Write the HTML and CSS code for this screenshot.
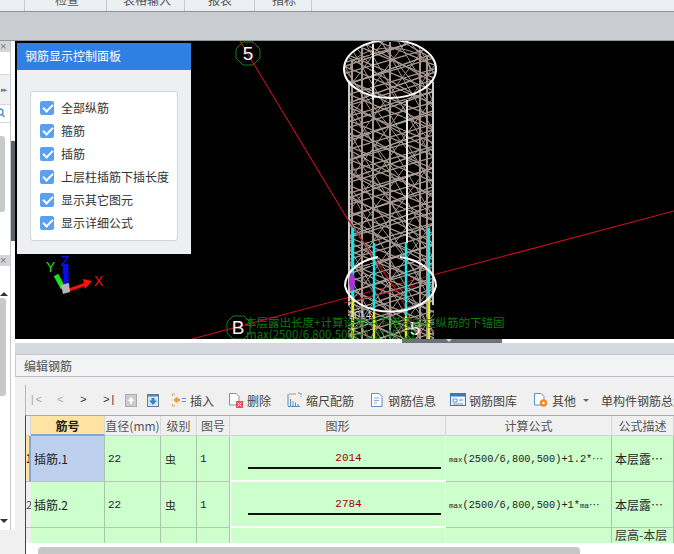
FILE: index.html
```html
<!DOCTYPE html>
<html lang="zh">
<head>
<meta charset="utf-8">
<title>编辑钢筋</title>
<link rel="stylesheet" href="styles.css">
</head>
<body>
<div class="app">
  <nav class="ribbon">
    <span class="tab tab-check">检查</span>
    <span class="tab tab-table">表格输入</span>
    <span class="tab tab-report">报表</span>
    <span class="tab tab-index">指标</span>
  </nav>
  <div class="strip"></div>
  <div class="work">
    <aside class="side">
      <div class="side-top">
        <div class="side-head">×</div>
        <div class="side-blank"></div>
        <div class="side-tools">▸▸</div>
        <div class="side-search">
          <svg class="lens" viewBox="0 0 8 12"><circle cx="0" cy="5" r="3" fill="none" stroke="#4a90c8" stroke-width="1.3"/><path d="M2 7l2.500 3" stroke="#4a90c8" stroke-width="1.300"/></svg>
        </div>
        <div class="side-list"><div class="side-thumb"></div></div>
      </div>
      <div class="side-bottom">
        <div class="side-head">×</div>
        <div class="side-blank2"></div>
        <div class="side-arrow-up"></div>
        <div class="side-thumb2"></div>
        <div class="side-arrow-down"></div>
      </div>
      <div class="side-foot"></div>
      <div class="side-splitter"></div>
    </aside>
    <main class="content">
      <section class="viewport">
        <svg class="scene" viewBox="15 41 659 298" xmlns="http://www.w3.org/2000/svg">
          <defs>
            <pattern id="p1" patternUnits="userSpaceOnUse" width="37" height="11"><path d="M0 11L37 0" stroke="#a5978f" stroke-width="1.200"/></pattern>
            <pattern id="p2" patternUnits="userSpaceOnUse" width="31" height="13"><path d="M0 0L31 13" stroke="#a5978f" stroke-width="1.200"/></pattern>
            <pattern id="p3" patternUnits="userSpaceOnUse" width="17" height="29"><path d="M0 0L17 29" stroke="#a5978f" stroke-width="1"/></pattern>
            <pattern id="p4" patternUnits="userSpaceOnUse" width="23" height="31"><path d="M0 31L23 0" stroke="#a5978f" stroke-width="1"/></pattern>
            <pattern id="p5" patternUnits="userSpaceOnUse" width="53" height="19"><path d="M0 19L53 0" stroke="#b0a29a" stroke-width="1.400"/></pattern>
            <pattern id="p6" patternUnits="userSpaceOnUse" width="41" height="23"><path d="M0 0L41 23" stroke="#a5978f" stroke-width="1.100"/></pattern>
            <pattern id="p7" patternUnits="userSpaceOnUse" width="29" height="37"><path d="M0 0L29 37" stroke="#a5978f" stroke-width="1"/></pattern>
            <clipPath id="col"><ellipse cx="390" cy="69" rx="45" ry="28"/><rect x="348" y="69" width="86" height="270"/></clipPath>
          </defs>
          <path class="axis-red" d="M240 41L345 215M345 215L400 296L420 339"/>
          <path class="axis-red" d="M192 339L674 211"/>
          <g clip-path="url(#col)">
            <rect x="340" y="40" width="100" height="300" fill="url(#p1)"/>
            <rect x="340" y="40" width="100" height="300" fill="url(#p2)"/>
            <rect x="340" y="40" width="100" height="300" fill="url(#p3)"/>
            <rect x="340" y="40" width="100" height="300" fill="url(#p4)"/>
            <rect x="340" y="40" width="100" height="300" fill="url(#p5)"/>
            <rect x="340" y="40" width="100" height="300" fill="url(#p6)"/>
            <rect x="340" y="40" width="100" height="300" fill="url(#p7)"/>
            <path class="bars" d="M352 60V339M362 48V339M390 42V339M420 50V339M427 56V339"/>
            <path class="bars-white" d="M373 44V100M407 100V243"/>
            <path class="bars" d="M373 100V243"/>
          </g>
          <path class="edge" d="M349 82V305M433 82V305"/>
          <ellipse class="ring" cx="390" cy="69" rx="46" ry="29"/>
          <path class="ring-thin" d="M350 70A40 22 0 0 1 430 70"/>
          <path class="axis-red dim" d="M345 215L400 296M344 303L415 286"/>
          <path class="cyan" d="M353 228V298M374 243V312M406 243V316M429 228V298"/>
          <path class="yellow" d="M353 298V339M374 312V339M406 316V339M429 298V339"/>
          <ellipse class="blob" cx="352" cy="282" rx="3" ry="9"/>
          <path class="ring" d="M345 286A46 30 0 0 1 378 257M400 257A46 30 0 0 1 436 286A46 30 0 0 1 345 286"/>
          <polygon class="hex" points="243,42 253,42 260,49 260,58 253,65 243,65 236,58 236,49"/>
          <text class="grid-label" x="248" y="60" text-anchor="middle">5</text>
          <polygon class="hex" points="233,316 244,316 250,322 250,333 244,339 233,339 227,333 227,322"/>
          <text class="grid-label" x="238" y="334" text-anchor="middle">B</text>
          <text class="grid-label" x="415" y="335" text-anchor="middle">5</text>
          <text class="small-num" x="349" y="319">2014</text>
          <text class="note" x="245" y="327">本层露出长度+计算设置中不搭接的柱纵筋的下锚固</text>
          <text class="note" x="246" y="339">max(2500/6,800,500)+1.2*45*22</text>
          <path class="gz-green" d="M63 288L56 275"/>
          <path class="gz-blue" d="M66 287V268"/>
          <path class="gz-blue" d="M65 274L66 264"/>
          <path class="gz-red" d="M69 290L86 284"/>
          <polygon fill="#ff1010" points="92,281 83,279 85,289"/>
          <polygon fill="#b8b4b4" points="61,285 69,283 70,292 63,294"/>
          <text class="gz-y" x="46" y="272">Y</text>
          <text class="gz-z" x="61" y="266">Z</text>
          <text class="gz-x" x="94" y="286">X</text>
        </svg>
        <div class="control-panel">
          <h2 class="cp-title">钢筋显示控制面板</h2>
          <div class="cp-body">
            <ul class="cp-card">
              <li class="cp-row"><span class="check"></span>全部纵筋</li>
              <li class="cp-row"><span class="check"></span>箍筋</li>
              <li class="cp-row"><span class="check"></span>插筋</li>
              <li class="cp-row"><span class="check"></span>上层柱插筋下插长度</li>
              <li class="cp-row"><span class="check"></span>显示其它图元</li>
              <li class="cp-row"><span class="check"></span>显示详细公式</li>
            </ul>
          </div>
        </div>
      </section>
      <div class="handle-row"><div class="handle"><span class="handle-arrow"></span></div></div>
      <div class="band"></div>
      <header class="panel-head">编辑钢筋</header>
      <section class="panel-body">
        <div class="toolbar">
          <span class="nav nav-first dimmed">|&lt;</span>
          <span class="nav nav-prev dimmed">&lt;</span>
          <span class="nav nav-next">&gt;</span>
          <span class="nav nav-last">&gt;|</span>
          <svg class="ico ico-up" viewBox="0 0 12 13"><rect x=".5" y=".5" width="11" height="12" fill="#c9cdd0" stroke="#a9adb0"/><path d="M6 3L2.500 7H5V10H7V7H9.500Z" fill="#fff"/></svg>
          <svg class="ico ico-down" viewBox="0 0 12 13"><rect x=".5" y=".5" width="11" height="12" fill="#d8e6f2" stroke="#5b7f9f"/><rect x=".5" y=".5" width="11" height="2" fill="#5b7f9f"/><path d="M6 11L2 6.500H4.500V4H7.500V6.500H10Z" fill="#2f86d8"/></svg>
          <span class="tool tool-insert"><svg class="ico16" viewBox="0 0 16 14"><path d="M4 1H1.500V3M1.500 11V13H4" fill="none" stroke="#d9a060"/><path d="M2 7L6.500 3.500V5.800H9V8.200H6.500V10.500Z" fill="#ee9a3c"/><path d="M10.500 5.500H15M10.500 8.500H15" fill="none" stroke="#5b9bd5"/></svg>插入</span>
          <span class="tool tool-del"><svg class="ico16" viewBox="0 0 16 16"><path d="M1.500 1.500H8L11 4.500V13H1.500Z" fill="#fff" stroke="#8a8f94"/><rect x="8" y="9" width="7" height="7" fill="#e0505a"/><path d="M9.500 10.500L13.500 14.500M13.500 10.500L9.500 14.500" stroke="#fff"/></svg>删除</span>
          <span class="tool tool-scale"><svg class="ico16" viewBox="0 0 16 16"><path d="M1 2V14M3.500 7V14M6 9V14M8.500 10.500V14M11 12V14M1 14.500H13" stroke="#5b8fb8" fill="none"/><path d="M2 2H9" stroke="#e08a3c"/><path d="M11 1H14V5" stroke="#7a8a9a" fill="none" stroke-dasharray="2 1"/></svg>缩尺配筋</span>
          <span class="tool tool-info"><svg class="ico16" viewBox="0 0 16 16"><path d="M2.500 1.500H10L13 4.500V14.500H2.500Z" fill="#fff" stroke="#5b8fc8"/><path d="M5 6H10M5 8.500H10M5 11H8" stroke="#8aa8c8"/></svg>钢筋信息</span>
          <span class="tool tool-lib"><svg class="ico16" viewBox="0 0 16 14"><rect x=".5" y=".5" width="15" height="12" fill="#eef5fb" stroke="#3a7ab8"/><rect x=".5" y=".5" width="15" height="3" fill="#3a7ab8"/><path d="M3 6H7V9H3ZM9 7H13M3 11H13" stroke="#7a9ab8" fill="none"/></svg>钢筋图库</span>
          <span class="tool tool-other"><svg class="ico16" viewBox="0 0 16 16"><path d="M1.500 1.500H8L11 4.500V13H1.500Z" fill="#fff" stroke="#5b8fc8"/><circle cx="10.500" cy="11" r="3.700" fill="#ee8a2c"/><circle cx="10.500" cy="11" r="1.300" fill="#fff"/></svg>其他</span>
          <span class="caret"></span>
          <span class="tool tool-total">单构件钢筋总量</span>
        </div>
        <div class="grid-wrap">
          <table class="grid">
            <colgroup>
              <col class="c0"><col class="c1"><col class="c2"><col class="c3"><col class="c4"><col class="c5"><col class="c6"><col class="c7"><col class="c8">
            </colgroup>
            <thead>
              <tr><th></th><th class="sel-head">筋号</th><th>直径(mm)</th><th>级别</th><th>图号</th><th>图形</th><th>计算公式</th><th>公式描述</th><th></th></tr>
            </thead>
            <tbody>
              <tr>
                <td class="rownum cur">1</td><td class="name sel">插筋.1</td><td class="mono">22</td><td class="grade">虫</td><td class="mono">1</td>
                <td class="shape"><span class="len">2014</span><span class="bar"></span></td>
                <td class="formula"><span class="fn">max</span>(2500/6,800,500)+1.2*⋯</td><td class="desc">本层露…</td><td></td>
              </tr>
              <tr>
                <td class="rownum">2</td><td class="name">插筋.2</td><td class="mono">22</td><td class="grade">虫</td><td class="mono">1</td>
                <td class="shape"><span class="len">2784</span><span class="bar"></span></td>
                <td class="formula"><span class="fn">max</span>(2500/6,800,500)+1*<span class="fn">ma</span>⋯</td><td class="desc">本层露…</td><td></td>
              </tr>
              <tr class="last">
                <td class="rownum"></td><td></td><td></td><td></td><td></td><td class="shape"></td><td></td><td class="desc top">层高-本层</td><td></td>
              </tr>
            </tbody>
          </table>
        </div>
        <div class="hscroll"><div class="hthumb"></div></div>
      </section>
    </main>
  </div>
</div>
</body>
</html>
```

FILE: styles.css
```css
* { box-sizing: border-box; margin: 0; padding: 0; }
html, body { width: 674px; height: 554px; overflow: hidden; background: #f0f0f0; }
body { font-family: "Noto Sans CJK SC", "Liberation Sans", sans-serif; font-size: 12px; color: #333; }
.app { display: flex; flex-direction: column; width: 674px; height: 554px; overflow: hidden; }

.ribbon { height: 12px; flex: none; display: flex; align-items: flex-end; background: #edf0f2; border-bottom: 1px solid #8f9499; padding-left: 24px; overflow: hidden; }
.tab { border-left: 1px solid #c8cbce; height: 18px; line-height: 14px; color: #555; font-size: 12px; flex: none; padding-left: 3px; padding-bottom: 4px; display: flex; align-items: flex-end; justify-content: center; }
.tab-check { width: 82px; }
.tab-table { width: 78px; }
.tab-report { width: 70px; padding-left: 1px; }
.tab-index { width: 58px; border-right: 1px solid #c8cbce; padding-left: 2px; }

.strip { height: 29px; flex: none; background: #c9ccd1; border-bottom: 1px solid #8f9499; }
.work { flex: 1; display: flex; min-height: 0; }

.side { width: 15px; flex: none; background: #fff; position: relative; display: flex; flex-direction: column; overflow: hidden; }
.side-top { height: 214px; flex: none; width: 11px; display: flex; flex-direction: column; border-right: 1px solid #c5c8cc; }
.side-head { height: 11px; flex: none; background: #d3d5d8; color: #777; font-size: 11px; line-height: 11px; padding-left: 0; font-family: "Liberation Sans", sans-serif; }
.side-blank { height: 22px; flex: none; background: #fff; }
.side-tools { height: 30px; flex: none; background: #f0f1f2; border-top: 1px solid #d8d8d8; color: #777; font-size: 7px; line-height: 30px; letter-spacing: -1px; padding-left: 1px; font-family: "DejaVu Sans", sans-serif; }
.side-search { height: 19px; flex: none; background: #fff; border-top: 1px solid #d8d8d8; border-bottom: 1px solid #d8d8d8; }
.lens { display: block; width: 8px; height: 12px; margin-top: 2px; }
.side-list { flex: 1; padding-top: 13px; background: #fff; }
.side-thumb { width: 5px; height: 76px; background: #c9c9c9; border-radius: 0 3px 3px 0; }
.side-bottom { height: 275px; flex: none; width: 11px; display: flex; flex-direction: column; margin-top: 0; border-right: 1px solid #c5c8cc; background: #fff; }
.side-blank2 { height: 26px; flex: none; }
.side-arrow-up { height: 0; width: 0; margin-left: 0; border-left: 4px solid transparent; border-right: 4px solid transparent; border-bottom: 4px solid #333; flex: none; margin-bottom: 2px; }
.side-thumb2 { width: 6px; height: 98px; background: #c9c9c9; border-radius: 0 3px 3px 0; flex: none; }
.side-arrow-down { height: 0; width: 0; margin-top: 123px; border-left: 4px solid transparent; border-right: 4px solid transparent; border-top: 4px solid #333; flex: none; }
.side-foot { flex: 1; background: #f0f0f0; width: 15px; }
.side-splitter { position: absolute; left: 11px; top: 100px; width: 4px; height: 100px; background: #5f6368; }

.content { flex: 1; min-width: 0; display: flex; flex-direction: column; }
.viewport { height: 298px; flex: none; background: #000; position: relative; overflow: hidden; }
.scene { display: block; width: 659px; height: 298px; }

.axis-red { stroke: #c8101c; stroke-width: 1.100; fill: none; }
.axis-red.dim { stroke: #a01822; }
.bars { stroke: #a5978f; stroke-width: 2; fill: none; }
.bars-white { stroke: #e8e4e2; stroke-width: 2; fill: none; }
.edge { stroke: #cfcac7; stroke-width: 2; fill: none; }
.ring { stroke: #fff; stroke-width: 2; fill: none; }
.ring-thin { stroke: #a5978f; stroke-width: 1; fill: none; }
.cyan { stroke: #19e6e6; stroke-width: 2.500; fill: none; }
.yellow { stroke: #e0e838; stroke-width: 2.500; fill: none; }
.blob { fill: #b030d8; }
.hex { fill: none; stroke: #1c7a1c; stroke-width: 1; }
.grid-label { fill: #f4f4f4; font-family: "Liberation Sans", sans-serif; font-size: 19px; }
.small-num { fill: #d8d8d8; font-family: "Liberation Sans", sans-serif; font-size: 10px; }
.note { fill: #0c7a0c; font-family: "Noto Sans CJK SC", sans-serif; font-size: 11.500px; }
.gz-green { stroke: #1ee01e; stroke-width: 5; }
.gz-blue { stroke: #0a0af0; stroke-width: 5; }
.gz-red { stroke: #f01010; stroke-width: 3; }
.gz-y, .gz-z, .gz-x { font-family: "Liberation Sans", sans-serif; font-size: 14px; }
.gz-y { fill: #1ee01e; }
.gz-z { fill: #1010ff; }
.gz-x { fill: #f01010; }

.control-panel { position: absolute; left: 2px; top: 2px; width: 174px; height: 211px; background: #eeeff1; display: flex; flex-direction: column; }
.cp-title { height: 27px; flex: none; background: #2f80e4; color: #fff; font-size: 12px; font-weight: normal; line-height: 26px; padding-left: 8px; }
.cp-body { padding: 21px 13px 0; }
.cp-card { list-style: none; height: 150px; background: #fff; border: 1px solid #d2d4d8; border-radius: 3px; padding: 4px 0 0 9px; display: flex; flex-direction: column; }
.cp-row { height: 23px; flex: none; display: flex; align-items: center; gap: 7px; color: #333; font-size: 12px; white-space: nowrap; }
.check { width: 14px; height: 14px; background: #5aa0f0; border-radius: 2px; position: relative; flex: none; }
.check::after { content: ""; position: absolute; left: 3px; top: 3px; width: 8px; height: 4px; border-left: 2px solid #fff; border-bottom: 2px solid #fff; transform: rotate(-45deg); }

.handle-row { height: 4px; flex: none; background: #fff; padding-left: 387px; }
.handle { width: 100px; height: 4px; background: #6c7278; position: relative; }
.handle-arrow { position: absolute; left: 44px; top: 0; border-left: 3px solid transparent; border-right: 3px solid transparent; border-top: 3px solid #d8dadc; }
.band { height: 12px; flex: none; background: #d5d8de; border-bottom: 1px solid #c2c5ca; }
.panel-head { height: 22px; flex: none; background: #f2f3f4; border-bottom: 1px solid #b8bbbf; border-left: 1px solid #c8cacd; padding-left: 8px; line-height: 21px; color: #666; font-size: 12px; font-weight: 500; }
.panel-body { flex: 1; min-height: 0; display: flex; flex-direction: column; padding: 8px 0 0 10px; background: #f0f0f0; }

.toolbar { height: 30px; flex: none; position: relative; display: flex; align-items: center; border-left: 1px solid #b8b8b8; color: #444; font-size: 12px; overflow: hidden; }
.nav { font-family: "Liberation Mono", monospace; font-size: 11px; color: #333; flex: none; }
.dimmed { color: #aaa; }
.nav-first { margin-left: 3px; width: 28px; }
.nav-prev { width: 23px; }
.nav-next { width: 23px; }
.nav-last { width: 22px; }
.ico { width: 12px; height: 13px; flex: none; }
.ico-down { margin-left: 10px; }
.ico16 { width: 16px; height: 16px; flex: none; }
.tool { display: flex; align-items: center; gap: 3px; white-space: nowrap; flex: none; }
.tool-insert { margin-left: 12px; }
.tool-del { margin-left: 14px; }
.tool-scale { margin-left: 16px; }
.tool-info { margin-left: 15px; }
.tool-lib { margin-left: 14px; }
.tool-other { margin-left: 16px; }
.caret { margin-left: 7px; border-left: 3px solid transparent; border-right: 3px solid transparent; border-top: 3px solid #666; flex: none; }
.tool-total { margin-left: 12px; }

.grid-wrap { height: 128px; flex: none; overflow: hidden; border-left: 1px solid #444; border-top: 1px solid #a8a8a8; background: #fff; }
.grid { table-layout: fixed; width: 690px; border-collapse: separate; border-spacing: 0; }
.c0 { width: 5px; }
.c1 { width: 74px; }
.c2 { width: 56px; }
.c3 { width: 36px; }
.c4 { width: 33px; }
.c5 { width: 216px; }
.c6 { width: 166px; }
.c7 { width: 62px; }
.c8 { width: 42px; }
.grid th { height: 20px; background: #f0f0f0; font-weight: normal; color: #555; font-size: 12px; border-right: 1px solid #d8d8d8; border-bottom: 1px solid #d0d0d0; text-align: center; white-space: nowrap; padding: 0; overflow: hidden; }
.grid th.sel-head { background: #ffe3a3; color: #222; font-weight: 700; border-bottom: 2px solid #7fa7d8; }
.grid td { height: 46px; background: #ccffcc; border-right: 1px solid #a9c4a9; border-bottom: 1px solid #b4c8b4; color: #222; font-size: 12px; padding: 0 0 0 5px; white-space: nowrap; overflow: hidden; }
.grid .last td { height: 20px; border-bottom: 0; }
.grid td.rownum { background: #f0f0f0; padding: 0; font-size: 11px; text-align: center; border-right: 0; color: #444; line-height: 11px; }
.grid td.rownum.cur { background: #ffe3a3; border-right: 2px solid #7fa7d8; font-weight: 700; color: #111; }
.grid td.name { padding-left: 3px; font-size: 12px; }
.grid td.sel { background: #bdd0ee; }
.grid td.mono { font-family: "Liberation Mono", monospace; font-size: 11px; padding-left: 3px; }
.grid td.grade { padding-left: 4px; font-size: 11px; }
.grid td.shape { border-right: 1px solid #fff; border-bottom: 2px solid #fff; border-left: 1px solid #fff; padding: 16px 0 0; text-align: center; vertical-align: top; }
.len { display: block; font-family: "Liberation Mono", monospace; font-size: 11px; line-height: 13px; color: #a00000; padding-left: 21px; }
.bar { display: block; height: 2px; width: 193px; margin: 2px 0 0 17px; background: #111; }
.grid td.formula { font-family: "Liberation Mono", "DejaVu Sans", monospace; font-size: 10.300px; padding-left: 3px; color: #222; }
.fn { font-size: 7.500px; }
.grid td.desc { font-size: 12px; padding-left: 3px; }
.grid td.desc.top { vertical-align: top; padding-top: 0; line-height: 14px; color: #333; }

.hscroll { flex: 1; min-height: 0; background: #fff; border-left: 1px solid #444; padding: 4px 0 0 12px; overflow: hidden; }
.hthumb { width: 542px; height: 12px; background: #c6c6c6; border-radius: 4px; }
```
